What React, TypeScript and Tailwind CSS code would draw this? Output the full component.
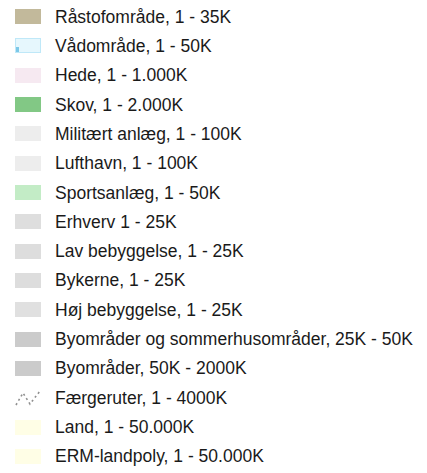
import React from "react";

type Item = { label: string; swatch: string; kind?: "water" | "ferry" };

const items: Item[] = [
  { label: "Råstofområde, 1 - 35K", swatch: "bg-[#c2b99b]" },
  { label: "Vådområde, 1 - 50K", swatch: "bg-[#e6f7fd] border border-[#bfe8f8]", kind: "water" },
  { label: "Hede, 1 - 1.000K", swatch: "bg-[#f6e9f1]" },
  { label: "Skov, 1 - 2.000K", swatch: "bg-[#82c885]" },
  { label: "Militært anlæg, 1 - 100K", swatch: "bg-[#ededed]" },
  { label: "Lufthavn, 1 - 100K", swatch: "bg-[#ededed]" },
  { label: "Sportsanlæg, 1 - 50K", swatch: "bg-[#c3ecc6]" },
  { label: "Erhverv 1 - 25K", swatch: "bg-[#dedede]" },
  { label: "Lav bebyggelse, 1 - 25K", swatch: "bg-[#dddddd]" },
  { label: "Bykerne, 1 - 25K", swatch: "bg-[#dddddd]" },
  { label: "Høj bebyggelse, 1 - 25K", swatch: "bg-[#e0e0e0]" },
  { label: "Byområder og sommerhusområder, 25K - 50K", swatch: "bg-[#cbcbcb]" },
  { label: "Byområder, 50K - 2000K", swatch: "bg-[#cbcbcb]" },
  { label: "Færgeruter, 1 - 4000K", swatch: "", kind: "ferry" },
  { label: "Land, 1 - 50.000K", swatch: "bg-[#fffee6]" },
  { label: "ERM-landpoly, 1 - 50.000K", swatch: "bg-[#fffee6]" },
];

const Swatch = ({ item }: { item: Item }) => {
  if (item.kind === "ferry") {
    return (
      <svg width="26" height="16" viewBox="0 0 26 16" className="shrink-0">
        <path
          d="M1 15 L8 3 L15 14 L25 1"
          fill="none"
          stroke="#8f8f8f"
          strokeWidth="1.6"
          strokeDasharray="2 3"
        />
      </svg>
    );
  }
  return (
    <div className={`relative w-[26px] h-[15px] shrink-0 ${item.swatch}`}>
      {item.kind === "water" && (
        <div className="absolute left-0 bottom-0 w-[3px] h-[5px] bg-[#7cc8e8]" />
      )}
    </div>
  );
};

export default function App() {
  return (
    <div
      className="w-[427px] h-[473px] bg-white pt-[2px] pl-[15px] text-[#1a1a1a] text-[17.5px]"
      style={{ fontFamily: '"Liberation Sans", Arial, sans-serif' }}
    >
      {items.map((item, i) => (
        <div key={i} className="flex items-center gap-[14px] h-[29.33px]">
          <Swatch item={item} />
          <span className="whitespace-nowrap">{item.label}</span>
        </div>
      ))}
    </div>
  );
}
